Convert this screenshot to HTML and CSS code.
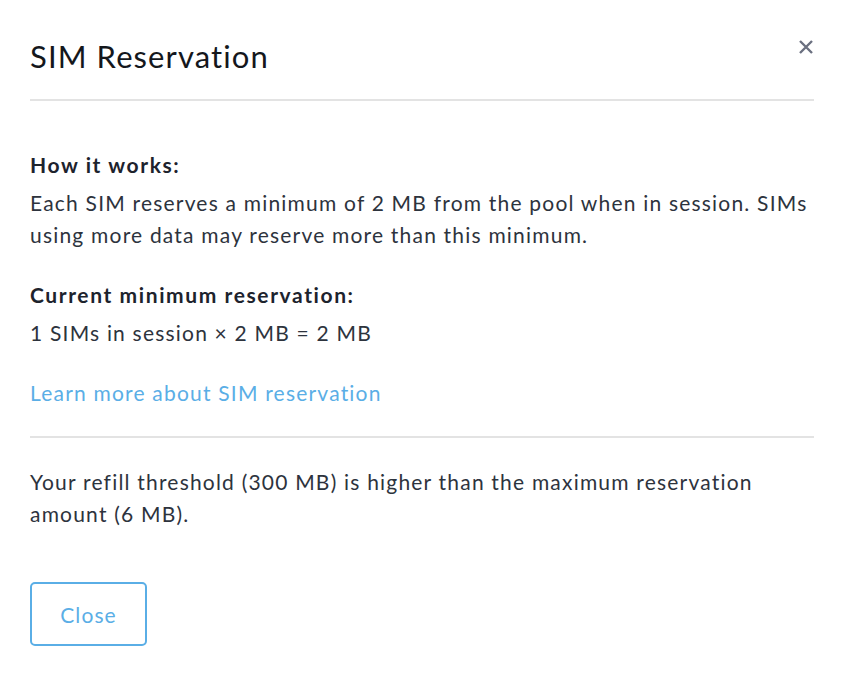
FILE: index.html
```html
<!DOCTYPE html>
<html>
<head>
<meta charset="utf-8">
<link rel="stylesheet" href="styles.css">
</head>
<body>
<div class="modal">
  <div class="header">
    <h1 class="title">SIM Reservation</h1>
    <button class="x" aria-label="Close">
      <svg width="16" height="16" viewBox="0 0 16 16"><path d="M2 2 L14 14 M14 2 L2 14" stroke="#6b7080" stroke-width="2.4" stroke-linecap="butt" fill="none"/></svg>
    </button>
  </div>
  <div class="section">
    <h2 class="label">How it works:</h2>
    <p class="text">Each SIM reserves a minimum of 2 MB from the pool when in session. SIMs using more data may reserve more than this minimum.</p>
    <h2 class="label second">Current minimum reservation:</h2>
    <p class="text">1 SIMs in session × 2 MB = 2 MB</p>
    <a class="link" href="#">Learn more about SIM reservation</a>
  </div>
  <div class="section last">
    <p class="text">Your refill threshold (300 MB) is higher than the maximum reservation amount (6 MB).</p>
    <button class="close">Close</button>
  </div>
</div>
</body>
</html>
```
FILE: styles.css
```css
html, body {
  margin: 0;
  padding: 0;
  background: #ffffff;
}
body {
  font-family: "Lato", "Open Sans", sans-serif;
  color: #2d333d;
}
.modal {
  width: 784px;
  padding: 0 28px 0 30px;
}
.header {
  display: flex;
  justify-content: space-between;
  align-items: flex-start;
  height: 99px;
  border-bottom: 2px solid #e3e3e3;
}
.title {
  margin: 38px 0 0;
  font-size: 31px;
  font-weight: 400;
  line-height: 36px;
  letter-spacing: 1.1px;
  color: #14171c;
}
.x {
  margin: 39px 0 0 0;
  padding: 0;
  border: 0;
  background: none;
  width: 16px;
  height: 16px;
}
.section {
  padding-top: 48px;
  padding-bottom: 27px;
  border-bottom: 2px solid #e3e3e3;
}
.section.last {
  border-bottom: 0;
  padding-top: 28px;
}
.label {
  margin: 0;
  font-size: 21px;
  font-weight: 700;
  line-height: 32px;
  letter-spacing: 1.6px;
  color: #1d232d;
}
.label.second {
  margin-top: 28px;
}
.text {
  margin: 6px 0 0;
  font-size: 21px;
  line-height: 32px;
  letter-spacing: 1.2px;
}
.section.last .text {
  margin: 0;
}
.link {
  display: block;
  margin-top: 28px;
  font-size: 21px;
  line-height: 32px;
  letter-spacing: 1.2px;
  color: #5aaee6;
  text-decoration: none;
}
.close {
  display: block;
  margin-top: 52px;
  width: 117px;
  height: 64px;
  border: 2px solid #5aaee6;
  border-radius: 5px;
  background: #fff;
  color: #5aaee6;
  font-family: inherit;
  font-size: 21px;
  letter-spacing: 1.1px;
}
```
